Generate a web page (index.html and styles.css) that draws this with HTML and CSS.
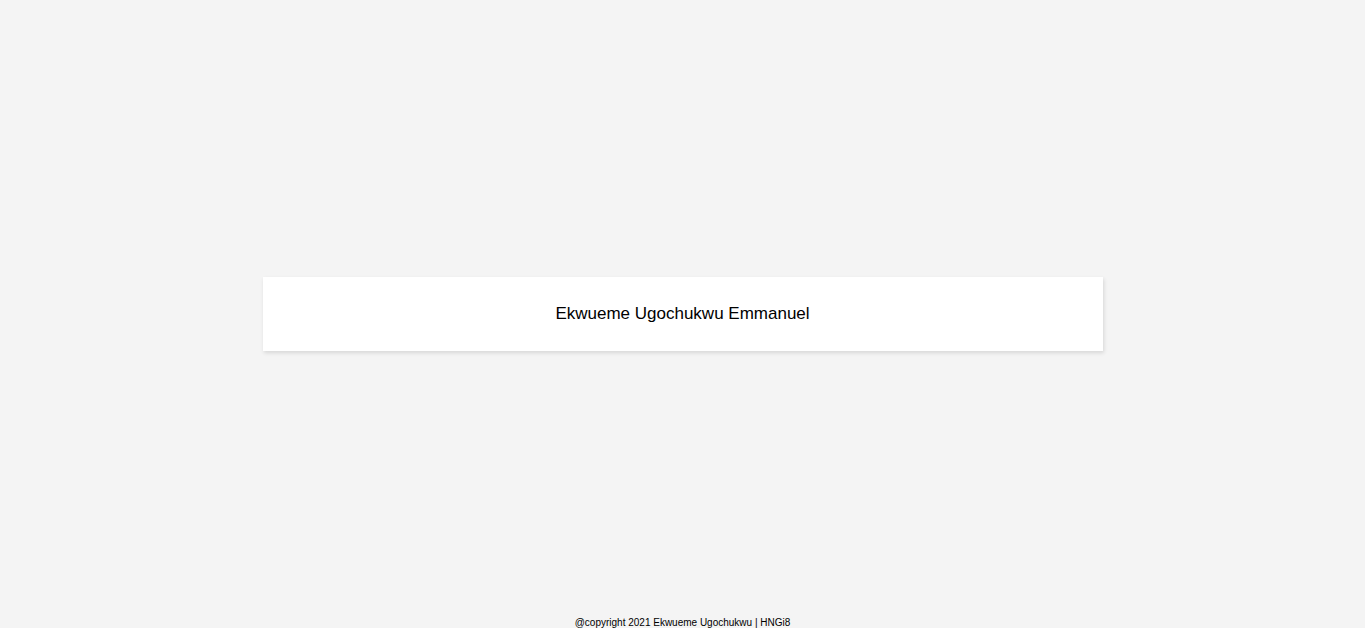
FILE: index.html
```html
<!DOCTYPE html>
<html lang="en">
<head>
<meta charset="utf-8">
<title>Ekwueme Ugochukwu Emmanuel</title>
<link rel="stylesheet" href="styles.css">
</head>
<body>
<main class="stage">
  <div class="card">
    <p class="name">Ekwueme Ugochukwu Emmanuel</p>
  </div>
</main>
<footer class="footer">@copyright 2021 Ekwueme Ugochukwu | HNGi8</footer>
</body>
</html>
```
FILE: styles.css
```css
html, body {
  margin: 0;
  padding: 0;
}
body {
  background: #f4f4f4;
  font-family: "Liberation Sans", Arial, sans-serif;
  color: #000;
}
.stage {
  height: 100vh;
  display: flex;
  align-items: center;
  justify-content: center;
}
.card {
  width: 840px;
  height: 74px;
  background: #fff;
  box-shadow: 1px 2px 4px rgba(0, 0, 0, 0.12);
  display: flex;
  align-items: center;
  justify-content: center;
}
.name {
  margin: 0;
  font-size: 17px;
}
.footer {
  margin-top: -11px;
  text-align: center;
  font-size: 10px;
  line-height: 11.5px;
}
```
